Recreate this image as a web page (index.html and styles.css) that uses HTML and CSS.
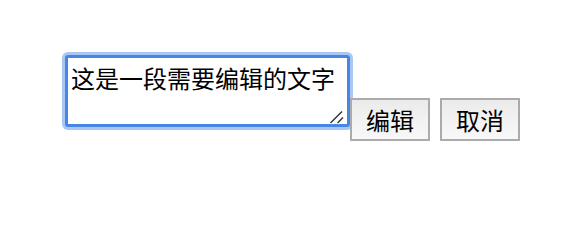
FILE: index.html
```html
<!DOCTYPE html>
<html lang="zh-CN">
<head>
<meta charset="utf-8">
<title>编辑</title>
<link rel="stylesheet" href="styles.css">
</head>
<body>
<div class="row">
  <div class="field">
    <textarea class="editor" autofocus>这是一段需要编辑的文字</textarea>
    <svg class="grip" width="16" height="16" viewBox="0 0 16 16" aria-hidden="true">
      <line x1="2.5" y1="15" x2="14" y2="3.5" stroke="#ffffff" stroke-width="1.2"/>
      <line x1="1.5" y1="14" x2="13" y2="2.5" stroke="#333333" stroke-width="1.5"/>
      <line x1="9.5" y1="15" x2="15" y2="9.5" stroke="#ffffff" stroke-width="1.2"/>
      <line x1="8.5" y1="14" x2="14" y2="8.5" stroke="#333333" stroke-width="1.5"/>
    </svg>
  </div>
  <button class="btn btn-edit">编辑</button>
  <button class="btn btn-cancel">取消</button>
</div>
</body>
</html>
```
FILE: styles.css
```css
html, body {
  margin: 0;
  padding: 0;
  background: #ffffff;
}

.row {
  display: flex;
  align-items: flex-start;
  padding: 55px 0 0 65px;
  font-family: "Noto Sans CJK SC", "Noto Sans", sans-serif;
}

.field {
  position: relative;
  width: 285px;
  height: 72px;
  flex: none;
}

.editor {
  display: block;
  box-sizing: border-box;
  width: 285px;
  height: 72px;
  margin: 0;
  padding: 5px 3px 3px 3px;
  border: 3px solid #4886e4;
  border-radius: 3px;
  box-shadow: 0 0 0 3px #a9c7f5;
  outline: none;
  resize: none;
  font-family: "Noto Sans CJK SC", "Noto Sans", sans-serif;
  font-size: 24px;
  line-height: 30px;
  color: #000000;
  background: #ffffff;
  caret-color: #000000;
  overflow: hidden;
}

.grip {
  position: absolute;
  right: 5px;
  bottom: 2px;
  display: block;
}

.btn {
  box-sizing: border-box;
  width: 80px;
  height: 43px;
  margin: 43px 0 0 0;
  padding: 0;
  border: 2px solid #ababab;
  border-radius: 0;
  background: linear-gradient(#ebebeb, #f8f8f8);
  font-family: "Noto Sans CJK SC", "Noto Sans", sans-serif;
  font-size: 24px;
  line-height: 1;
  color: #000000;
  display: flex;
  align-items: center;
  justify-content: center;
  position: relative;
}

.btn-cancel {
  margin-left: 10px;
}
```
